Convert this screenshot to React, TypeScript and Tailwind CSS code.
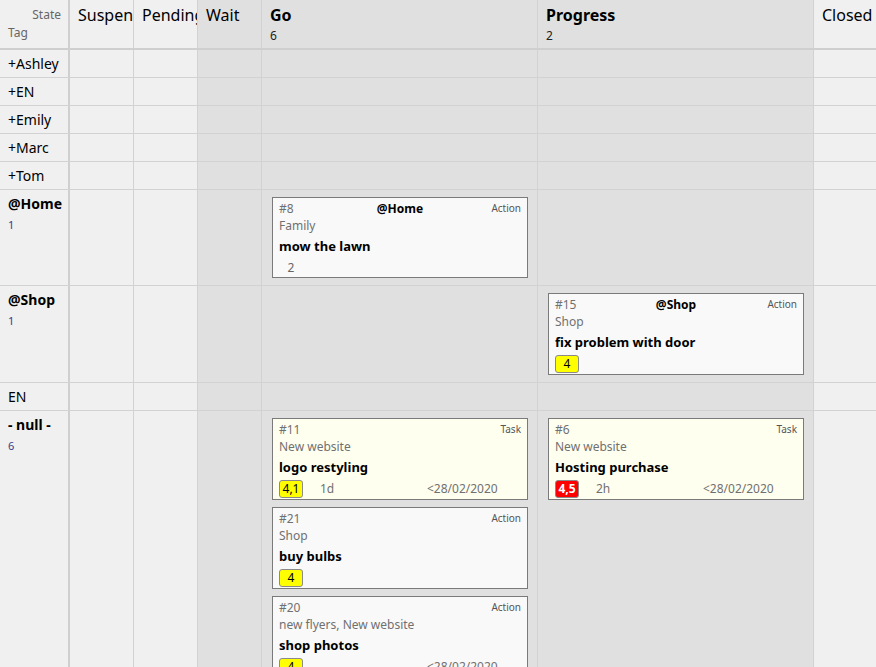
import React from "react";

type Badge = { text: string; kind: "none" | "yellow" | "red" };
type Card = {
  id: string;
  center?: string;
  type: string;
  sub: string;
  title: string;
  badge: Badge;
  est?: string;
  date?: string;
  task?: boolean;
};

const COLS = [
  { w: "w-[64px]", bg: "bg-[#f0f0f0]", name: "Suspend", bold: false },
  { w: "w-[64px]", bg: "bg-[#f0f0f0]", name: "Pending", bold: false },
  { w: "w-[64px]", bg: "bg-[#e0e0e0]", name: "Wait", bold: false },
  { w: "w-[276px]", bg: "bg-[#e0e0e0]", name: "Go", bold: true, count: "6" },
  { w: "w-[276px]", bg: "bg-[#e0e0e0]", name: "Progress", bold: true, count: "2" },
  { w: "w-[62px]", bg: "bg-[#f0f0f0]", name: "Closed", bold: false },
];

function BadgeView({ b }: { b: Badge }) {
  if (b.kind === "none") {
    return (
      <div className="w-[24px] h-[17px] flex items-center justify-center text-[12px] text-[#666]">
        {b.text}
      </div>
    );
  }
  return (
    <div
      className={
        b.kind === "yellow"
          ? "w-[24px] h-[18px] flex items-center justify-center rounded-[3px] border border-[#8a8a8a] bg-[#ffff00] text-[12px] text-black"
          : "w-[24px] h-[18px] flex items-center justify-center rounded-[3px] border border-[#8a8a8a] bg-[#ff0000] text-[12px] font-bold text-white"
      }
    >
      {b.text}
    </div>
  );
}

function CardView({ c }: { c: Card }) {
  return (
    <div
      className={
        c.task
          ? "border border-[#7a7a7a] bg-[#fffff0] px-[6px] pt-[2px] pb-[1px]"
          : "border border-[#7a7a7a] bg-[#f9f9f9] px-[6px] pt-[2px] pb-[1px]"
      }
    >
      <div className="relative h-[18px] flex items-center">
        <span className="text-[12px] text-[#707070]">{c.id}</span>
        {c.center && (
          <span className="absolute left-0 right-0 text-center text-[12px] font-bold text-black">
            {c.center}
          </span>
        )}
        <span className="ml-auto text-[10px] text-[#555] relative -top-[1px]">{c.type}</span>
      </div>
      <div className="h-[16px] flex items-center text-[12px] text-[#707070] whitespace-nowrap">{c.sub}</div>
      <div className="h-[25px] flex items-center text-[13px] font-bold text-black whitespace-nowrap">{c.title}</div>
      <div className="flex items-center">
        <BadgeView b={c.badge} />
        <div className="ml-[17px] w-[107px] text-[12px] text-[#707070]">{c.est ?? ""}</div>
        <div className="text-[12px] text-[#707070]">{c.date ?? ""}</div>
      </div>
    </div>
  );
}

type Row = {
  label: string;
  bold?: boolean;
  count?: string;
  cards?: { [col: number]: Card[] };
  tall?: boolean;
};

const ROWS: Row[] = [
  { label: "+Ashley" },
  { label: "+EN" },
  { label: "+Emily" },
  { label: "+Marc" },
  { label: "+Tom" },
  {
    label: "@Home",
    bold: true,
    count: "1",
    cards: {
      3: [
        {
          id: "#8",
          center: "@Home",
          type: "Action",
          sub: "Family",
          title: "mow the lawn",
          badge: { text: "2", kind: "none" },
        },
      ],
    },
  },
  {
    label: "@Shop",
    bold: true,
    count: "1",
    cards: {
      4: [
        {
          id: "#15",
          center: "@Shop",
          type: "Action",
          sub: "Shop",
          title: "fix problem with door",
          badge: { text: "4", kind: "yellow" },
        },
      ],
    },
  },
  { label: "EN" },
  {
    label: "- null -",
    bold: true,
    count: "6",
    tall: true,
    cards: {
      3: [
        {
          id: "#11",
          type: "Task",
          sub: "New website",
          title: "logo restyling",
          badge: { text: "4,1", kind: "yellow" },
          est: "1d",
          date: "<28/02/2020",
          task: true,
        },
        {
          id: "#21",
          type: "Action",
          sub: "Shop",
          title: "buy bulbs",
          badge: { text: "4", kind: "yellow" },
        },
        {
          id: "#20",
          type: "Action",
          sub: "new flyers, New website",
          title: "shop photos",
          badge: { text: "4", kind: "yellow" },
          date: "<28/02/2020",
        },
      ],
      4: [
        {
          id: "#6",
          type: "Task",
          sub: "New website",
          title: "Hosting purchase",
          badge: { text: "4,5", kind: "red" },
          est: "2h",
          date: "<28/02/2020",
          task: true,
        },
      ],
    },
  },
];

export default function App() {
  return (
    <div
      className="w-[876px] h-[667px] overflow-hidden bg-[#f0f0f0] text-black"
      style={{ fontFamily: '"Segoe UI", "Noto Sans", sans-serif' }}
    >
      {/* Header */}
      <div className="flex h-[50px] border-b-2 border-[#cfcfcf]">
        <div className="w-[70px] shrink-0 border-r-2 border-[#cfcfcf] bg-[#f0f0f0] flex flex-col pt-[6px] pr-[7px] pl-[8px]">
          <div className="text-right text-[12px] text-[#666] h-[18px] leading-[18px]">State</div>
          <div className="text-[12px] text-[#666] h-[18px] leading-[18px]">Tag</div>
        </div>
        {COLS.map((c, i) => (
          <div
            key={i}
            className={`${c.w} ${c.bg} shrink-0 overflow-hidden whitespace-nowrap pl-[8px] pt-[4px] ${
              i < COLS.length - 1 ? "border-r border-[#d2d2d2]" : ""
            }`}
          >
            <div className={`text-[16px] h-[22px] leading-[22px] ${c.bold ? "font-bold" : ""}`}>{c.name}</div>
            {c.count && <div className="text-[12px] h-[20px] leading-[20px] text-[#222]">{c.count}</div>}
          </div>
        ))}
      </div>
      {/* Rows */}
      {ROWS.map((r, ri) => {
        const hasCards = !!r.cards;
        return (
          <div
            key={ri}
            className={`flex border-b border-[#d2d2d2] ${hasCards ? "" : "h-[28px]"} ${r.tall ? "min-h-[400px]" : ""}`}
          >
            <div
              className={`w-[70px] shrink-0 border-r-2 border-[#cfcfcf] bg-[#f0f0f0] pl-[8px] ${
                hasCards ? "pt-[5px]" : "flex items-center"
              }`}
            >
              <div className={`text-[14px] whitespace-nowrap ${hasCards ? "h-[18px] leading-[18px]" : ""} ${r.bold ? "font-bold" : ""}`}>
                {r.label}
              </div>
              {r.count && <div className="text-[11px] h-[24px] leading-[24px] text-[#3a3a8a]">{r.count}</div>}
            </div>
            {COLS.map((c, ci) => {
              const cards = r.cards?.[ci] ?? [];
              return (
                <div
                  key={ci}
                  className={`${c.w} ${c.bg} shrink-0 ${ci < COLS.length - 1 ? "border-r border-[#d2d2d2]" : ""} ${
                    cards.length ? "pl-[10px] pr-[9px] py-[7px] flex flex-col gap-[7px]" : ""
                  } ${hasCards && !cards.length ? "min-h-[94px]" : ""}`}
                >
                  {cards.map((card, k) => (
                    <CardView key={k} c={card} />
                  ))}
                </div>
              );
            })}
          </div>
        );
      })}
    </div>
  );
}
